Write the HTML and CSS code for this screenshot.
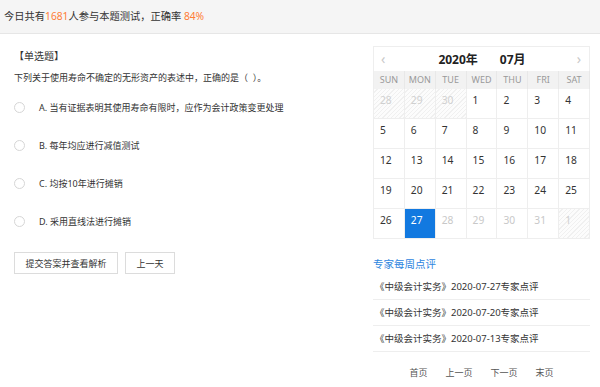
FILE: index.html
```html
<!DOCTYPE html>
<html lang="zh-CN">
<head>
<meta charset="utf-8">
<title>每日一练</title>
<link rel="stylesheet" href="styles.css">
</head>
<body>
<div class="topbar">今日共有<span class="hl">1681</span>人参与本题测试，正确率 <span class="hl">84%</span></div>
<div class="main">
  <div class="left">
    <div class="tag">【单选题】</div>
    <div class="question">下列关于使用寿命不确定的无形资产的表述中，正确的是（&nbsp;&nbsp;）。</div>
    <ul class="options">
      <li class="option"><span class="radio"></span><span class="opt-text">A. 当有证据表明其使用寿命有限时，应作为会计政策变更处理</span></li>
      <li class="option"><span class="radio"></span><span class="opt-text">B. 每年均应进行减值测试</span></li>
      <li class="option"><span class="radio"></span><span class="opt-text">C. 均按10年进行摊销</span></li>
      <li class="option"><span class="radio"></span><span class="opt-text">D. 采用直线法进行摊销</span></li>
    </ul>
    <div class="actions">
      <button class="btn btn-submit">提交答案并查看解析</button>
      <button class="btn btn-prev">上一天</button>
    </div>
  </div>
  <div class="right">
    <div class="calendar">
      <div class="cal-head">
        <span class="arrow">&lsaquo;</span>
        <span class="cal-title"><span>2020年</span><span>07月</span></span>
        <span class="arrow">&rsaquo;</span>
      </div>
      <div class="cal-grid">
        <div class="wd">SUN</div><div class="wd">MON</div><div class="wd">TUE</div><div class="wd">WED</div><div class="wd">THU</div><div class="wd">FRI</div><div class="wd">SAT</div>
        <div class="day out">28</div><div class="day out">29</div><div class="day out">30</div><div class="day">1</div><div class="day">2</div><div class="day">3</div><div class="day">4</div>
        <div class="day">5</div><div class="day">6</div><div class="day">7</div><div class="day">8</div><div class="day">9</div><div class="day">10</div><div class="day">11</div>
        <div class="day">12</div><div class="day">13</div><div class="day">14</div><div class="day">15</div><div class="day">16</div><div class="day">17</div><div class="day">18</div>
        <div class="day">19</div><div class="day">20</div><div class="day">21</div><div class="day">22</div><div class="day">23</div><div class="day">24</div><div class="day">25</div>
        <div class="day">26</div><div class="day active">27</div><div class="day future">28</div><div class="day future">29</div><div class="day future">30</div><div class="day future">31</div><div class="day out">1</div>
      </div>
    </div>
    <div class="review-title">专家每周点评</div>
    <ul class="review-list">
      <li>《中级会计实务》2020-07-27专家点评</li>
      <li>《中级会计实务》2020-07-20专家点评</li>
      <li>《中级会计实务》2020-07-13专家点评</li>
    </ul>
    <div class="pager">
      <span>首页</span><span>上一页</span><span>下一页</span><span>末页</span>
    </div>
  </div>
</div>
</body>
</html>
```
FILE: styles.css
```css
* { box-sizing: border-box; }
body {
  margin: 0;
  font-family: "Noto Sans", "Noto Sans CJK SC", sans-serif;
  color: #333;
  background: #fff;
}
ul { list-style: none; margin: 0; padding: 0; }

.topbar {
  height: 34px;
  line-height: 33px;
  background: #f5f5f5;
  border-bottom: 1px solid #e6e6e6;
  padding-left: 4px;
  font-size: 10.25px;
  color: #333;
}
.hl { color: #ff7d35; }

.main {
  display: flex;
  align-items: flex-start;
}
.left {
  flex: 1;
  padding: 15px 0 0 14px;
}
.tag {
  font-size: 10px;
  line-height: 14px;
  color: #333;
}
.question {
  margin-top: 8px;
  font-size: 9px;
  line-height: 14px;
  color: #333;
}
.options { margin-top: 3px; }
.option {
  height: 38px;
  display: flex;
  align-items: center;
  font-size: 9px;
  color: #333;
}
.radio {
  width: 11px;
  height: 11px;
  border: 1px solid #d6d6d6;
  border-radius: 50%;
  margin-right: 14px;
  background: #fff;
}
.actions {
  margin-top: 12px;
  display: flex;
  gap: 7px;
}
.btn {
  height: 22px;
  border: 1px solid #dcdcdc;
  background: #fff;
  font-family: inherit;
  font-size: 9px;
  color: #333;
  padding: 0;
}
.btn-submit { width: 104px; }
.btn-prev { width: 50px; }

.right {
  width: 217px;
  margin: 12px 10px 0 0;
}
.calendar {
  border: 1px solid #eee;
  border-bottom: none;
  border-right: none;
}
.cal-head {
  height: 24px;
  display: flex;
  align-items: center;
  justify-content: space-between;
  padding: 0 8px 0 7px;
  border-right: 1px solid #eee;
}
.arrow {
  color: #c8c8c8;
  font-size: 14px;
  line-height: 14px;
}
.cal-title {
  display: flex;
  gap: 22px;
  font-weight: bold;
  font-size: 12px;
  color: #222;
  margin-left: 2px;
}
.cal-grid {
  display: grid;
  grid-template-columns: repeat(7, 1fr);
}
.wd {
  height: 18px;
  line-height: 18px;
  text-align: center;
  font-size: 9px;
  color: #999;
  background: #f2f2f2;
  border-right: 1px solid #e8e8e8;
}
.day {
  height: 30px;
  padding: 4px 0 0 6px;
  font-size: 10.25px;
  line-height: 14px;
  color: #333;
  border-right: 1px solid #eee;
  border-bottom: 1px solid #eee;
}
.day.out {
  color: #d0d0d0;
  background: repeating-linear-gradient(135deg, #fcfcfc 0 2px, #f0f0f0 2px 3px);
}
.day.future { color: #c8c8c8; }
.day.active {
  background: #1279e0;
  color: #fff;
}

.review-title {
  margin-top: 17px;
  font-size: 10.5px;
  line-height: 16px;
  color: #2e86e0;
}
.review-list li {
  height: 26px;
  line-height: 26px;
  padding-left: 2px;
  font-size: 9.5px;
  color: #333;
  border-bottom: 1px solid #eee;
}
.review-list li:first-child { margin-top: 2px; }
.pager {
  display: flex;
  justify-content: center;
  gap: 18px;
  margin-top: 14px;
  font-size: 9px;
  line-height: 14px;
  color: #555;
}
```
